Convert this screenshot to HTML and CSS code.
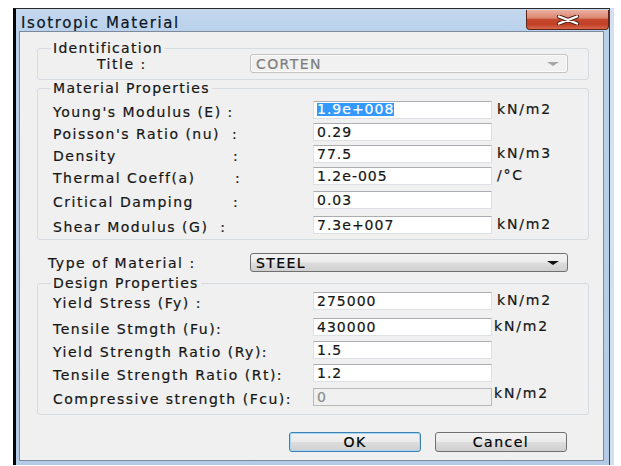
FILE: index.html
```html
<!DOCTYPE html>
<html lang="en">
<head>
<meta charset="utf-8">
<title>Isotropic Material</title>
<link rel="stylesheet" href="styles.css">
</head>
<body>
<div class="window">
  <div class="titlebar">
    <span class="title">Isotropic Material</span>
    <div class="close">
      <svg viewBox="0 0 24 10" preserveAspectRatio="none">
        <path d="M3 1.5 L21 8.5 M21 1.5 L3 8.5" stroke="#4a1e14" stroke-width="4.2" stroke-linecap="round" fill="none"/>
        <path d="M3 1.5 L21 8.5 M21 1.5 L3 8.5" stroke="#ffffff" stroke-width="2.4" stroke-linecap="round" fill="none"/>
      </svg>
    </div>
  </div>

  <div class="client">
    <fieldset class="group group-id">
      <legend>Identification</legend>
      <div class="row row-combo">
        <span class="label label-title">Title :</span>
        <div class="combo combo-disabled"><span>CORTEN</span><span class="arrow"></span></div>
      </div>
    </fieldset>

    <fieldset class="group group-mat">
      <legend>Material Properties</legend>
      <div class="rows">
        <div class="row"><span class="label">Young's Modulus (E) :</span><div class="field"><span class="sel">1.9e+008</span></div><span class="unit">kN/m2</span></div>
        <div class="row"><span class="label">Poisson's Ratio (nu)  :</span><div class="field">0.29</div></div>
        <div class="row"><span class="label"><span class="name">Density</span>:</span><div class="field">77.5</div><span class="unit">kN/m3</span></div>
        <div class="row"><span class="label"><span class="name name-wide">Thermal Coeff(a)</span>:</span><div class="field">1.2e-005</div><span class="unit">/°C</span></div>
        <div class="row row-space-2"><span class="label"><span class="name">Critical Damping</span>:</span><div class="field">0.03</div></div>
        <div class="row row-space-3"><span class="label">Shear Modulus (G)  :</span><div class="field">7.3e+007</div><span class="unit">kN/m2</span></div>
      </div>
    </fieldset>

    <div class="row row-combo row-type">
      <span class="label label-type">Type of Material :</span>
      <div class="combo"><span>STEEL</span><span class="arrow"></span></div>
    </div>

    <fieldset class="group group-design">
      <legend>Design Properties</legend>
      <div class="rows">
        <div class="row"><span class="label">Yield Stress (Fy) :</span><div class="field">275000</div><span class="unit">kN/m2</span></div>
        <div class="row row-space-3"><span class="label">Tensile Stmgth (Fu):</span><div class="field">430000</div><span class="unit unit-tight">kN/m2</span></div>
        <div class="row"><span class="label">Yield Strength Ratio (Ry):</span><div class="field">1.5</div></div>
        <div class="row"><span class="label">Tensile Strength Ratio (Rt):</span><div class="field">1.2</div></div>
        <div class="row row-space-1"><span class="label">Compressive strength (Fcu):</span><div class="field field-disabled">0</div><span class="unit unit-tight unit-high">kN/m2</span></div>
      </div>
    </fieldset>

    <div class="buttons">
      <button class="btn btn-default">OK</button>
      <button class="btn">Cancel</button>
    </div>
  </div>
</div>
</body>
</html>
```

FILE: styles.css
```css
* {
  box-sizing: border-box;
}

html,
body {
  margin: 0;
  padding: 0;
}

body {
  width: 621px;
  height: 466px;
  overflow: hidden;
  background: #ffffff;
  font-family: "DejaVu Sans", "Liberation Sans", sans-serif;
  font-size: 14px;
  letter-spacing: 1px;
  color: #161616;
  -webkit-text-stroke: 0.2px currentColor;
}

/* ---- window frame ---- */
.window {
  margin: 8px 0 0 13px;
  width: 597px;
  height: 457px;
  display: flex;
  flex-direction: column;
  border-top: 1px solid #2a2a2a;
  border-left: 3px solid #050505;
  border-right: 1px solid #34404c;
  background: linear-gradient(180deg, #c4d8ef 0, #bad1eb 24px, #b4cbe7 100%);
  box-shadow: 4px 0 0 #d2e0ef;
}

.titlebar {
  flex: none;
  height: 22px;
  display: flex;
  align-items: flex-start;
}

.title {
  margin: 5px 0 0 5px;
  font-size: 15px;
  line-height: 18px;
  letter-spacing: 1.6px;
  color: #0c1624;
}

.close {
  margin-left: auto;
  margin-top: 1px;
  width: 83px;
  height: 20px;
  display: flex;
  align-items: center;
  justify-content: center;
  border: 1px solid #5b2418;
  border-top: none;
  border-radius: 0 0 4px 4px;
  background: linear-gradient(180deg, #eab0a0 0%, #dc8771 42%, #c64a2f 50%, #c13f25 75%, #d6664c 100%);
}

.close svg {
  width: 24px;
  height: 10px;
}

.client {
  flex: none;
  margin: 0 5px 0 3px;
  height: 430px;
  border: 1px solid #7b8a9c;
  background: #f0f0f0;
}

/* ---- group boxes ---- */
.group {
  margin: 0 14px 0 17px;
  padding: 0 12px 5px 15px;
  min-width: 0;
  border: 1px solid #d6dbe0;
  border-radius: 3px;
}

.group legend {
  padding: 0 2px;
  margin-left: -2px;
  font-size: 14px;
  line-height: 12px;
  letter-spacing: 1.3px;
}

.group-id {
  margin-top: 10px;
  padding-bottom: 6px;
}

.group-mat {
  margin-top: 2px;
  padding-top: 7px;
  padding-bottom: 5px;
}

.group-design {
  margin-top: 5px;
  padding-top: 3px;
  padding-bottom: 8px;
}

.rows {
  display: flex;
  flex-direction: column;
  gap: 4px;
}

.group-design .rows {
  gap: 5px;
}

.row-space-1 {
  margin-top: 1px;
}

.row-space-2 {
  margin-top: 2px;
}

.row-space-3 {
  margin-top: 3px;
}

/* ---- label / field rows ---- */
.row {
  display: flex;
  align-items: center;
  height: 18px;
}

.row-combo {
  height: 19px;
}

.row-type {
  margin-top: 13px;
}

.label {
  flex: none;
  width: 260px;
  margin-top: 4px;
  line-height: 18px;
  letter-spacing: 1.5px;
  white-space: pre;
}

.label .name {
  display: inline-block;
  width: 180px;
}

.label .name-wide {
  width: 182px;
}

.label-title {
  width: 197px;
  padding-left: 44px;
  margin-top: 0;
}

.label-type {
  width: 230px;
  padding-left: 28px;
  margin-top: 0;
}

.field {
  flex: none;
  width: 179px;
  height: 18px;
  padding-left: 3px;
  line-height: 16px;
  background: #ffffff;
  border: 1px solid #dde1e6;
  border-top-color: #abadb3;
  white-space: nowrap;
  overflow: hidden;
}

.field-disabled {
  background: #f0f0f0;
  border-color: #b9b9b9;
  color: #8d8d8d;
}

.sel {
  display: inline-block;
  vertical-align: top;
  margin-top: 1px;
  line-height: 13px;
  background: #3399ff;
  color: #ffffff;
}

.unit {
  align-self: flex-start;
  margin-left: 5px;
  line-height: 16px;
  letter-spacing: 1.8px;
}

.unit-tight {
  margin-left: 2px;
}

.unit-high {
  margin-top: -3px;
}

/* ---- combo boxes ---- */
.combo {
  flex: none;
  width: 318px;
  height: 19px;
  display: flex;
  align-items: center;
  padding-left: 5px;
  border: 1px solid #707070;
  border-radius: 3px;
  background: linear-gradient(180deg, #f3f3f3 0%, #ececec 48%, #dddddd 52%, #d0d0d0 100%);
  color: #000000;
  letter-spacing: 1.4px;
}

.combo-disabled {
  border-color: #c3c3c3;
  background: #f1f1f1;
  box-shadow: inset 0 0 0 1px #fbfbfb;
  color: #7d7d7d;
}

.arrow {
  margin-left: auto;
  margin-right: 8px;
  width: 0;
  height: 0;
  border-left: 6px solid transparent;
  border-right: 6px solid transparent;
  border-top: 4px solid #111111;
}

.combo-disabled .arrow {
  border-top-color: #a6a6a6;
}

/* ---- dialog buttons ---- */
.buttons {
  display: flex;
  justify-content: flex-end;
  gap: 14px;
  margin-top: 17px;
  padding-right: 36px;
}

.btn {
  width: 132px;
  height: 20px;
  padding: 0;
  font-family: inherit;
  font-size: 14px;
  letter-spacing: 1.5px;
  line-height: 16px;
  color: #000000;
  -webkit-text-stroke: 0.2px currentColor;
  border: 1px solid #707070;
  border-radius: 3px;
  background: linear-gradient(180deg, #f2f2f2 0%, #ebebeb 48%, #dddddd 52%, #cfcfcf 100%);
}

.btn-default {
  border-color: #3c7fb1;
  box-shadow: inset 0 0 0 1px #a8d8f3;
}
```
